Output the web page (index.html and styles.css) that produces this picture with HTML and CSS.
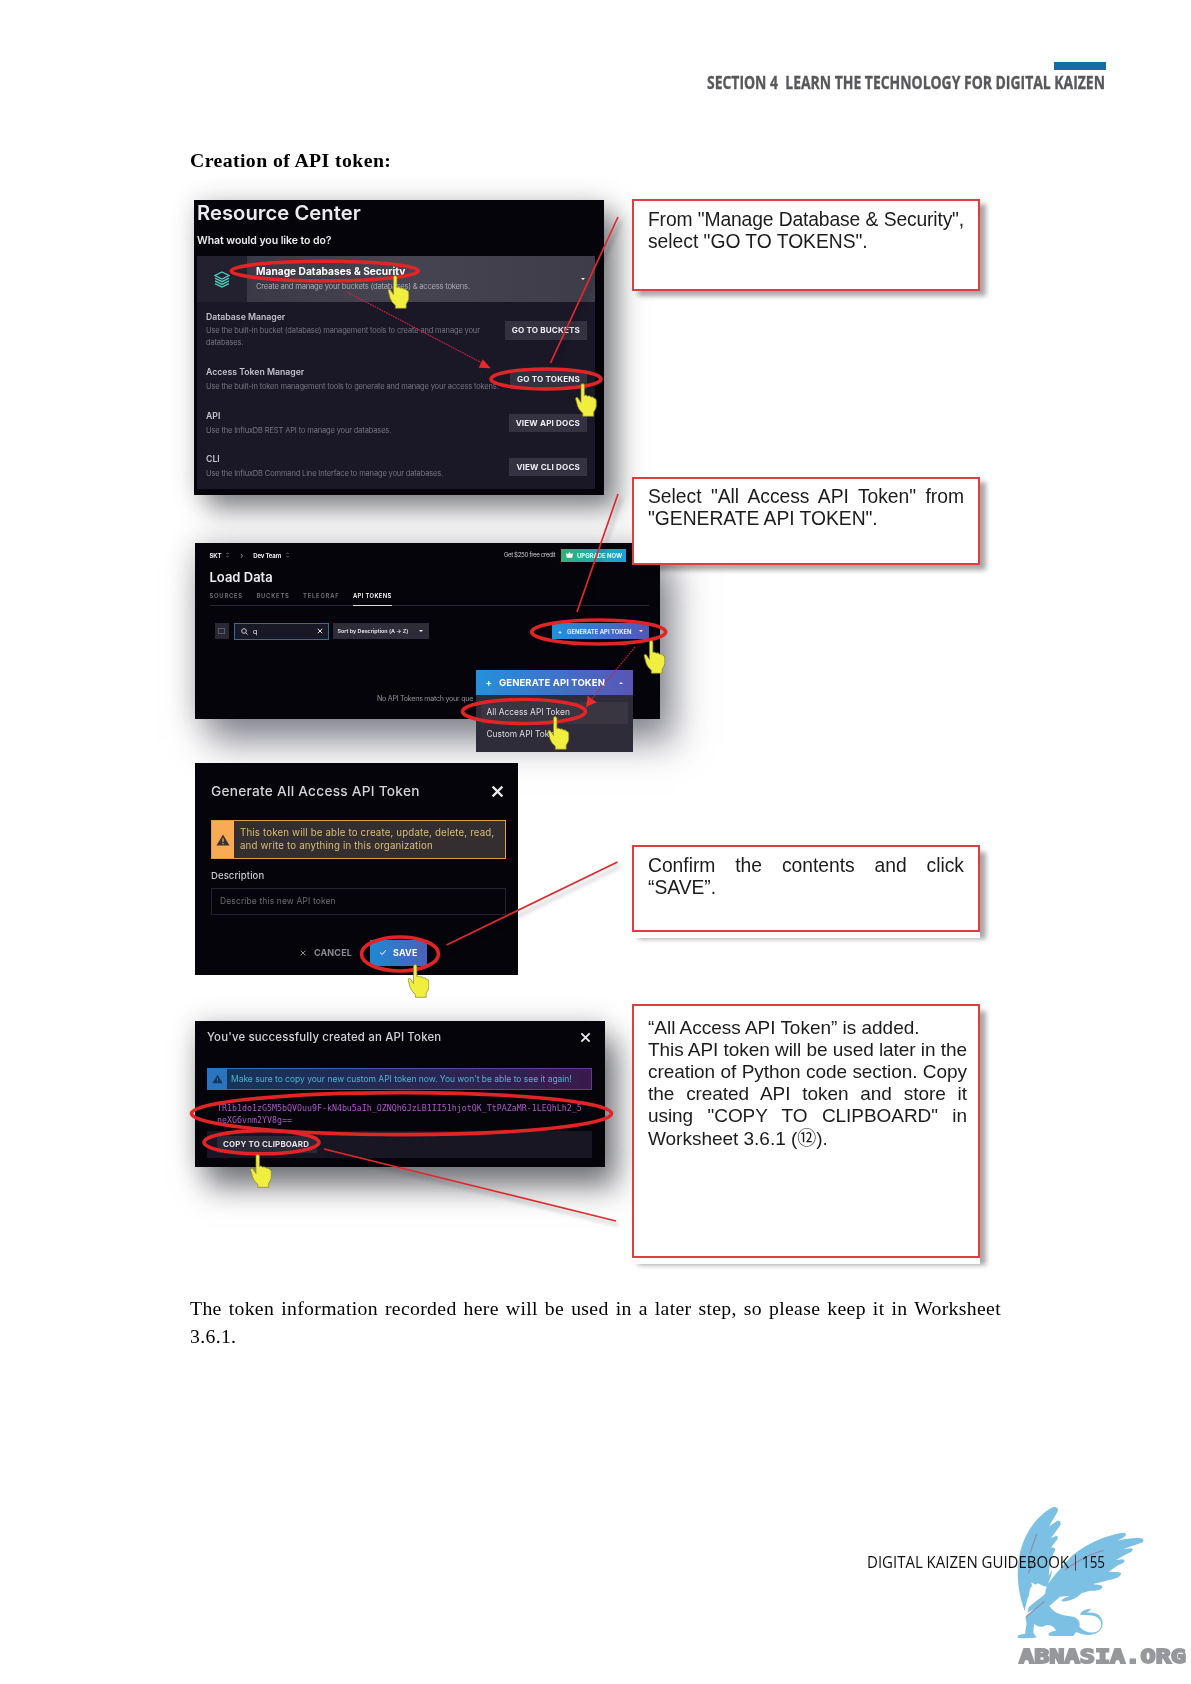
FILE: index.html
```html
<!DOCTYPE html>
<html lang="en">
<head>
<meta charset="utf-8">
<title>Digital Kaizen Guidebook</title>
<link rel="stylesheet" href="styles.css">
</head>
<body>
<svg class="defs" width="0" height="0">
  <defs>
    <symbol id="hand" viewBox="0 0 22 34"><path d="M6 2.2Q6 .6 7.6 .6T9.4 2.2V12.5Q10.600 11.500 11.800 12.400L12.500 13.300Q13.800 12.200 15.200 13.200L16 14.200Q17.200 13.500 18.200 14.300L19 15.300Q21.300 15 21.300 18V23.500Q20.800 26.500 18.700 29V33.300H7.800V30.200Q4 27.500 2.700 23.500L.6 15.800Q.8 13.600 2.600 14.600L6 19.500Z" fill="#f0ee3e" stroke="#8a8428" stroke-width=".7"/></symbol>
    <symbol id="warn" viewBox="0 0 14 12"><path d="M7 .5 13.500 11.500H.5Z" fill="currentColor"/><path d="M7 4.200V8M7 9V10.200" stroke="var(--mark)" stroke-width="1.200"/></symbol>
    <symbol id="cross" viewBox="0 0 12 12"><path d="M1.500 1.500 10.500 10.500M10.500 1.500 1.500 10.500" stroke="currentColor" stroke-width="2" fill="none"/></symbol>
  </defs>
</svg>
<div class="page">
  <header class="running-head">
    <div class="tab"></div>
    <svg width="400" height="24" viewBox="0 0 400 24"><text x="1" y="17" textLength="398" lengthAdjust="spacingAndGlyphs">SECTION 4&#160; LEARN THE TECHNOLOGY FOR DIGITAL KAIZEN</text></svg>
  </header>
  <h1>Creation of API token:</h1>

  <div class="figure">
    <div class="shots">
      <section class="shot resource">
        <h2>Resource Center</h2>
        <h3>What would you like to do?</h3>
        <div class="accordion">
          <div class="acc-head">
            <div class="acc-icon"><svg width="16" height="17" viewBox="0 0 16 17" fill="none" stroke="#4fd0c0" stroke-width="1.300"><path d="M8 1 15 4.500 8 8 1 4.500ZM1 7.200 8 10.700 15 7.200M1 9.900 8 13.400 15 9.900M1 12.600 8 16.100 15 12.600"/></svg></div>
            <div class="acc-title"><b>Manage Databases &amp; Security</b><span>Create and manage your buckets (databases) &amp; access tokens.</span></div>
            <i class="caret"></i>
          </div>
          <div class="row r1"><div><b>Database Manager</b><p>Use the built-in bucket (database) management tools to create and manage your<br>databases.</p></div><span class="btn">GO TO BUCKETS</span></div>
          <div class="row r2"><div><b>Access Token Manager</b><p>Use the built-in token management tools to generate and manage your access tokens.</p></div><span class="btn">GO TO TOKENS</span></div>
          <div class="row r3"><div><b>API</b><p>Use the InfluxDB REST API to manage your databases.</p></div><span class="btn">VIEW API DOCS</span></div>
          <div class="row r4"><div><b>CLI</b><p>Use the InfluxDB Command Line Interface to manage your databases.</p></div><span class="btn">VIEW CLI DOCS</span></div>
        </div>
      </section>

      <section class="shot load">
        <div class="crumbs"><b class="skt">SKT</b><svg class="c1" width="3" height="6" viewBox="0 0 3 6" fill="none" stroke="#777" stroke-width=".8"><path d="M.4 2 1.500 .8 2.600 2M.4 4 1.500 5.200 2.600 4"/></svg><i class="c2">›</i><b class="team">Dev Team</b><svg width="3" height="6" viewBox="0 0 3 6" fill="none" stroke="#777" stroke-width=".8"><path d="M.4 2 1.500 .8 2.600 2M.4 4 1.500 5.200 2.600 4"/></svg><span class="credit">Get $250 free credit</span><span class="upgrade"><svg width="7" height="6" viewBox="0 0 7 6"><path d="M0 1 2 2.200 3.500 0 5 2.200 7 1 6.300 5.800H.7Z" fill="#fff"/></svg>UPGRADE NOW</span></div>
        <h2>Load Data</h2>
        <nav><span>SOURCES</span><span>BUCKETS</span><span>TELEGRAF</span><span class="on">API TOKENS</span></nav>
        <div class="tools">
          <span class="check"><i></i></span>
          <span class="search"><svg width="7" height="7" viewBox="0 0 7 7" fill="none" stroke="#c8c8d0"><circle cx="3" cy="3" r="2.300"/><path d="M4.700 4.700 6.500 6.500"/></svg><em>q</em><svg width="6" height="6"><use href="#cross"/></svg></span>
          <span class="sort">Sort by Description (A → Z)<i class="caret"></i></span>
          <span class="gen"><em>+</em>GENERATE API TOKEN<i class="caret"></i></span>
        </div>
        <p class="none">No API Tokens match your que</p>
        <div class="menu">
          <div class="menu-head"><em>+</em>GENERATE API TOKEN<i class="caret up"></i></div>
          <div class="item hot">All Access API Token</div>
          <div class="item">Custom API Token</div>
        </div>
      </section>

      <section class="shot dialog">
        <div class="bar"><h2>Generate All Access API Token</h2><svg width="13" height="13"><use href="#cross"/></svg></div>
        <div class="alert"><div class="mark"><svg width="14" height="12"><use href="#warn"/></svg></div><p>This token will be able to create, update, delete, read,<br>and write to anything in this organization</p></div>
        <label>Description</label>
        <div class="input">Describe this new API token</div>
        <div class="actions"><span class="cancel"><svg width="6" height="6"><use href="#cross"/></svg>CANCEL</span><span class="save"><svg width="8" height="7" viewBox="0 0 8 7" fill="none" stroke="#fff"><path d="M1 3.500 3.200 5.500 7 1"/></svg>SAVE</span></div>
      </section>

      <section class="shot created">
        <div class="bar"><h2>You've successfully created an API Token</h2><svg width="11" height="11"><use href="#cross"/></svg></div>
        <div class="notice"><div class="mark"><svg width="11" height="10"><use href="#warn"/></svg></div><p>Make sure to copy your new custom API token now. You won't be able to see it again!</p></div>
        <div class="token">TR1b1do1zG5M5bQVOuu9F-kN4bu5aIh_OZNQh6JzLB1II51hjotQK_TtPAZaMR-1LEQhLh2_5<br>neXG6vnm2YV8g==</div>
        <div class="copy"><span>COPY TO CLIPBOARD</span></div>
      </section>
    </div>

    <div class="callouts">
      <div class="callout k1"><p class="fit">From "Manage Database &amp; Security",</p><p>select "GO TO TOKENS".</p></div>
      <div class="callout k2"><p class="fit">Select "All Access API Token" from</p><p>"GENERATE API TOKEN".</p></div>
      <div class="callout k3"><p class="fit">Confirm the contents and click</p><p>“SAVE”.</p></div>
      <div class="callout k4"><p>“All Access API Token” is added.</p><p class="fit">This API token will be used later in the</p><p class="fit">creation of Python code section. Copy</p><p class="fit">the created API token and store it</p><p class="fit">using "COPY TO CLIPBOARD" in</p><p>Worksheet 3.6.1 (<span class="cjk">⑫</span>).</p></div>
    </div>

    <svg class="marks" width="820" height="1070" viewBox="180 190 820 1070" fill="none">
      <g class="lines" stroke="#e02a30" stroke-width="1.700">
        <path d="M618 217 550.500 363"/><path d="M618 494 577 612"/><path d="M617.500 862 446.500 945"/><path d="M324 1149 616 1221"/>
      </g>
      <g stroke="#cf2240" stroke-width="1.100" stroke-dasharray="1.800 .8"><path d="M347 292 482 363"/><path d="M635 647 591 700"/></g>
      <path d="M482.700 359.300 490.700 368.300 478.700 367.700ZM587.700 695.700 596.700 702.300 586 707Z" fill="#e8282b"/>
      <g stroke="#e32426" stroke-width="3.600">
        <ellipse cx="324.700" cy="271" rx="93.500" ry="9.800"/>
        <ellipse cx="546" cy="379" rx="55" ry="10"/>
        <ellipse cx="598.700" cy="632" rx="67" ry="12"/>
        <ellipse cx="524" cy="711.500" rx="61.500" ry="12"/>
        <ellipse cx="400" cy="954" rx="38.500" ry="17"/>
        <ellipse cx="401.500" cy="1113.600" rx="210" ry="21"/>
        <ellipse cx="261.500" cy="1142.300" rx="57.500" ry="11.500"/>
      </g>
      <use href="#hand" x="387.500" y="275" width="22" height="34"/>
      <use href="#hand" x="575" y="383" width="22" height="34"/>
      <use href="#hand" x="643.500" y="640" width="22" height="34"/>
      <use href="#hand" x="547.500" y="716" width="22" height="34"/>
      <use href="#hand" x="407.500" y="964" width="22" height="34"/>
      <use href="#hand" x="250" y="1154" width="22" height="34"/>
    </svg>
  </div>

  <p class="body-text"><span class="fit">The token information recorded here will be used in a later step, so please keep it in Worksheet</span><span>3.6.1.</span></p>

  <footer><svg width="240" height="22" viewBox="0 0 240 22"><text x="1" y="16.500" textLength="202" lengthAdjust="spacingAndGlyphs">DIGITAL KAIZEN GUIDEBOOK</text><path d="M209.500 4V19.500" stroke="#c0504d"/><text x="216" y="16.500" textLength="23" lengthAdjust="spacingAndGlyphs">155</text></svg></footer>

  <div class="watermark">
    <svg width="140" height="145" viewBox="0 0 420 435">
      <g fill="#7cc0e4">
        <path d="M44 332C28 290 18 235 26 180C36 110 75 50 128 22C141 17 148 28 141 38L117 79L141 63C153 58 155 72 148 80L123 114L138 108C147 108 144 118 138 123L122 144C134 139 139 148 133 155L121 180L116 228L127 208L122 232L114 252L128 236L118 262L100 258L84 250L76 254L64 246L66 258C54 270 62 284 52 296Z"/>
        <path d="M56 322C80 300 100 290 106 280C104 255 140 220 165 190C200 145 270 110 338 98C352 97 350 108 338 114L322 122C350 116 375 112 394 115C404 118 402 128 390 130L340 147L364 145C374 150 364 157 350 162L318 180L340 178C350 184 338 190 325 195L296 215C310 218 324 213 332 218C336 226 325 233 310 237L250 252C262 256 277 252 277 262C275 272 255 273 240 272L214 280C203 293 180 306 155 304C150 299 168 292 180 287L150 290L118 318C135 345 165 347 190 350C205 355 212 368 208 380C225 398 255 405 269 388C283 365 263 345 238 346L210 344C215 330 228 328 243 326C240 332 234 336 226 339C255 333 279 345 278 373C275 400 245 410 215 402L198 396L190 408H122C108 405 118 394 138 392C132 378 118 371 103 378C92 384 80 378 72 372L70 398L80 412C70 415 40 415 24 414C20 406 30 402 45 402L50 370L46 352L75 326L52 338Z"/>
      </g>
      <path d="M80 102 60 160M72 178 55 220M280 152C240 160 200 185 165 210M104 304 48 350" fill="none" stroke="#967f9b" stroke-width="4" opacity=".75"/>
    </svg>
    <svg class="brand" width="171" height="22" viewBox="0 0 171 22"><text x="2" y="17.500" textLength="167" lengthAdjust="spacingAndGlyphs">ABNASIA.ORG</text></svg>
  </div>
</div>
</body>
</html>
```
FILE: styles.css
```css
* { box-sizing: border-box; }
body { margin: 0; background: #fff; }
h1, h2, h3, p { margin: 0; }
i, em { font-style: normal; }
.defs { display: block; }
.page { position: relative; width: 1191px; height: 1684px; overflow: hidden; padding: 62px 85px 0 190px; background: #fff; }

.running-head { display: flex; flex-direction: column; align-items: flex-end; height: 79px; }
.running-head .tab { width: 52px; height: 8px; background: #146f9f; }
.running-head svg { display: block; margin-top: 2px; overflow: visible; font: bold 18.500px "Open Sans", sans-serif; fill: #58585a; stroke: #58585a; stroke-width: .35px; }
.running-head text { white-space: pre; }
h1 { height: 58px; font: bold 19.800px/38px "Liberation Serif", serif; letter-spacing: .4px; color: #000; }

.figure { position: relative; display: flex; height: 1084px; }
.marks { position: absolute; left: -10px; top: -9px; z-index: 4; }
.marks .lines { filter: drop-shadow(3px 4px 2px rgba(0, 0, 0, .3)); }
.shots { width: 442px; flex: none; padding: 1px 0 0 4px; }
.shot { position: relative; background: #05040b; font-family: Inter, sans-serif; color: #ececf0; white-space: nowrap; }
.shot svg { flex: none; }
.caret { width: 0; height: 0; border: 2px solid transparent; border-top-color: #fff; border-bottom: 0; }
.caret.up { border: 2.500px solid transparent; border-bottom-color: #fff; border-top: 0; }

/* resource center */
.resource { width: 410px; height: 294.500px; padding: 0 9px 0 3px; box-shadow: 14px 14px 24px rgba(40, 42, 50, .55), 0 0 24px rgba(0, 0, 0, .15); }
.resource h2 { font-size: 20.200px; font-weight: 600; line-height: 26px; letter-spacing: .05px; }
.resource h3 { font-size: 10.500px; font-weight: 600; line-height: 29px; letter-spacing: -.05px; }
.accordion { height: 233px; margin-top: 1px; background: #1a1727; }
.acc-head { display: flex; align-items: center; height: 46px; background: linear-gradient(90deg, #373443, #474451 50%, #3f3c49); }
.acc-icon { display: flex; align-items: center; justify-content: center; width: 50px; height: 46px; background: #23202f; }
.acc-title { flex: 1; padding-left: 9px; }
.acc-title b, .acc-title span { display: block; line-height: 16px; }
.acc-title b { font-size: 10.200px; font-weight: 700; color: #fff; }
.acc-title span { font-size: 7.700px; letter-spacing: -.26px; color: #a9a7b2; }
.acc-head .caret { margin-right: 10px; }
.row { display: flex; justify-content: space-between; padding: 6.500px 8px 0 9px; }
.row b { display: block; font-size: 8.700px; font-weight: 600; line-height: 16px; color: #c3c1cb; }
.row p { font-size: 7.500px; line-height: 12.600px; letter-spacing: -.15px; color: #777483; }
.r1 { height: 55.500px; } .r2 { height: 43.500px; } .r3 { height: 43px; }
.btn { height: 18.500px; padding: 0 7px; background: #343140; font-size: 8.100px; font-weight: 700; line-height: 18.500px; letter-spacing: .15px; color: #eeeef2; margin-top: 12.500px; }
.r2 .btn { margin: 6px 0 0 -20px; } .r3 .btn { margin-top: 6px; } .r4 .btn { margin-top: 7px; }
.r2 p, .r3 p, .r4 p { line-height: 14px; }

/* load data */
.load { width: 465px; height: 176px; margin: 48.500px 0 0 1px; padding: 4px 11px 0 14.500px; box-shadow: 14px 24px 34px rgba(40, 42, 60, .5), 0 0 28px rgba(0, 0, 0, .22); }
.crumbs { display: flex; align-items: center; height: 16px; margin-right: 23px; font-size: 6px; letter-spacing: -.15px; }
.crumbs i { color: #aaa; font-size: 8px; }
.c1 { margin-left: 5px; } .c2 { margin-left: 11px; } .team { margin: 0 5px 0 10px; }
.credit { margin-left: auto; font-size: 6.300px; letter-spacing: -.45px; color: #c4c4cc; }
.upgrade { display: flex; align-items: center; gap: 4px; width: 65px; height: 13px; margin-left: 6px; padding-left: 5px; background: linear-gradient(90deg, #31b176, #1c9fdc); font-size: 5.900px; font-weight: 700; letter-spacing: 0; color: #e8fff8; }
.load h2 { margin-top: 4px; font-size: 13px; font-weight: 600; line-height: 20px; }
.load nav { display: flex; gap: 13.500px; height: 19px; border-bottom: 1px solid #2a2933; font-size: 5.800px; font-weight: 600; letter-spacing: .8px; line-height: 17px; color: #777582; }
.load nav .on { height: 19px; border-bottom: 1.500px solid #d8d8e0; color: #fff; letter-spacing: .4px; }
.tools { display: flex; align-items: center; height: 18px; margin: 16px 0 0 5px; font-size: 6px; }
.check { display: grid; place-items: center; width: 14.500px; height: 16px; background: #292734; }
.check i { width: 7px; height: 6px; border: 1px solid #5b5967; }
.search { display: flex; align-items: center; gap: 5px; width: 95px; height: 17px; margin-left: 5px; padding: 0 5px 0 6px; border: 1px solid #2b7197; background: #191925; font-size: 7px; }
.search svg:last-child { margin-left: auto; }
.sort { display: flex; align-items: center; justify-content: space-between; width: 96.500px; height: 16px; margin-left: 3.500px; padding: 0 6px 0 5px; background: #2e2c39; font-size: 5.400px; font-weight: 600; }
.gen { display: flex; align-items: center; width: 97px; height: 16px; margin-left: auto; padding: 0 6px; background: linear-gradient(90deg, #2191da, #5556b5); font-size: 5.900px; font-weight: 700; }
.gen em { margin-right: 5px; } .gen .caret { margin-left: auto; }
.none { margin: 51px 0 0 167.500px; font-size: 7.100px; line-height: 16px; letter-spacing: -.26px; color: #94929b; }
.menu { position: absolute; left: 280.500px; top: 127px; width: 157px; height: 82px; background: #2f2c39; }
.menu-head { display: flex; align-items: center; height: 25px; padding: 0 10px; background: linear-gradient(90deg, #2391dc, #5a55b6); font-size: 9.500px; font-weight: 700; letter-spacing: .1px; color: #fff; }
.menu-head em { margin-right: 7px; } .menu-head .caret { margin-left: auto; }
.item { height: 21.500px; margin: 0 5px; padding-left: 6px; font-size: 8.400px; line-height: 21.500px; color: #dddde2; }
.item.hot { margin-top: 7px; background: #393641; }

/* generate dialog */
.dialog { width: 323px; height: 212px; margin: 44px 0 0 1px; padding: 18px 12px 0 16px; }
.bar { display: flex; align-items: center; justify-content: space-between; }
.dialog h2 { font-size: 13.700px; font-weight: 500; line-height: 21px; letter-spacing: .25px; color: #d4d3da; }
.dialog .bar { padding-right: 2px; }
.alert { display: flex; height: 39px; margin-top: 18px; border: 1px solid #d9a03e; background: #352e30; color: #d6bf74; }
.alert .mark { display: grid; place-items: center; width: 22px; background: #f8aa54; color: #3a3336; --mark: #f8aa54; }
.alert p { padding: 5px 0 0 6px; font-size: 9.700px; line-height: 13px; letter-spacing: .17px; }
.dialog label { display: block; margin-top: 9px; font-size: 9.500px; font-weight: 500; line-height: 16px; letter-spacing: .1px; color: #c9c8cf; }
.input { height: 27px; margin-top: 3.500px; padding-left: 8px; border: 1px solid #24222d; font-size: 8.500px; line-height: 25px; letter-spacing: .12px; color: #6c6a74; }
.actions { display: flex; align-items: center; justify-content: flex-end; height: 26px; margin-top: 25px; padding-right: 79px; font-size: 9px; font-weight: 700; letter-spacing: .15px; }
.cancel { display: flex; align-items: center; gap: 8px; color: #8c8a94; margin-right: 18px; }
.save { display: flex; align-items: center; gap: 6px; width: 57px; height: 26px; padding-left: 9px; background: linear-gradient(90deg, #2088d2, #4c60b8); color: #fff; }

/* created dialog */
.created { width: 410px; height: 146px; margin: 46px 0 0 1px; padding: 6px 13px 0 12px; box-shadow: 12px 20px 28px rgba(35, 37, 45, .6), 0 0 24px rgba(0, 0, 0, .18); }
.created h2 { font-size: 11.400px; font-weight: 500; line-height: 20px; letter-spacing: .17px; color: #d4d3da; }
.created .bar { padding-right: 1px; }
.notice { display: flex; height: 22px; margin-top: 21px; border: 1px solid; border-image: linear-gradient(90deg, #2a74c0, #6a3590) 1; background: linear-gradient(90deg, #14355a, #3b1a4e); color: #4bb5d2; }
.notice .mark { display: grid; place-items: center; width: 19px; background: #2a74c0; color: #173356; --mark: #2a74c0; }
.notice p { padding-left: 4px; font-size: 8.500px; line-height: 20px; letter-spacing: -.02px; }
.token { height: 41px; padding: 13px 0 0 10px; font: 8.300px/11.500px "DejaVu Sans Mono", monospace; color: #ac58c4; }
.copy { display: flex; height: 27px; padding: 5px 10px; background: #191624; }
.copy span { width: 100px; padding-left: 6px; background: #2b2837; font-size: 7.900px; font-weight: 700; line-height: 17px; letter-spacing: .18px; color: #e4e3e8; }

/* callouts */
.callouts { width: 348px; flex: none; }
.callout { position: relative; z-index: 2; padding: 7.500px 14px 0; border: 2px solid #df3d40; background: #fff; box-shadow: 6px 5px 5px rgba(0, 0, 0, .35); font: 19.300px/22px "Liberation Sans", sans-serif; letter-spacing: -.02px; color: #1c1c1c; }
.callout p { white-space: nowrap; }
.fit { text-align: justify; text-align-last: justify; }
.k1 { height: 92px; }
.k1 .fit { letter-spacing: -.16px; }
.k2 { height: 88px; margin-top: 185.500px; }
.k3 { height: 87px; margin-top: 280.500px; }
.k4 { height: 254px; margin-top: 72px; padding: 10.500px 11px 0 14px; font-size: 19px; }
.k4 .fit { letter-spacing: -.06px; }
.k3, .k4 { box-shadow: 0 6px 0 #fdfdfd, 6px 7px 5px rgba(0, 0, 0, .35); }
.cjk { font-family: "Noto Sans CJK JP", sans-serif; line-height: 1; }

.body-text { width: 811px; margin-top: 11px; font: 19.700px/28px "Liberation Serif", serif; letter-spacing: .35px; color: #000; }
.body-text span { display: block; white-space: nowrap; }
footer { display: flex; justify-content: flex-end; margin-top: 200.500px; }
footer svg { overflow: visible; font: 15.500px "Open Sans", sans-serif; fill: #111; }
.watermark { position: absolute; left: 1010px; top: 1500px; width: 181px; mix-blend-mode: multiply; }
.watermark svg { display: block; }
.watermark .brand { margin: 0 0 0 7px; font: bold 19.500px "DejaVu Sans Mono", monospace; fill: #96989b; stroke: #96989b; stroke-width: 1.800px; }
```
